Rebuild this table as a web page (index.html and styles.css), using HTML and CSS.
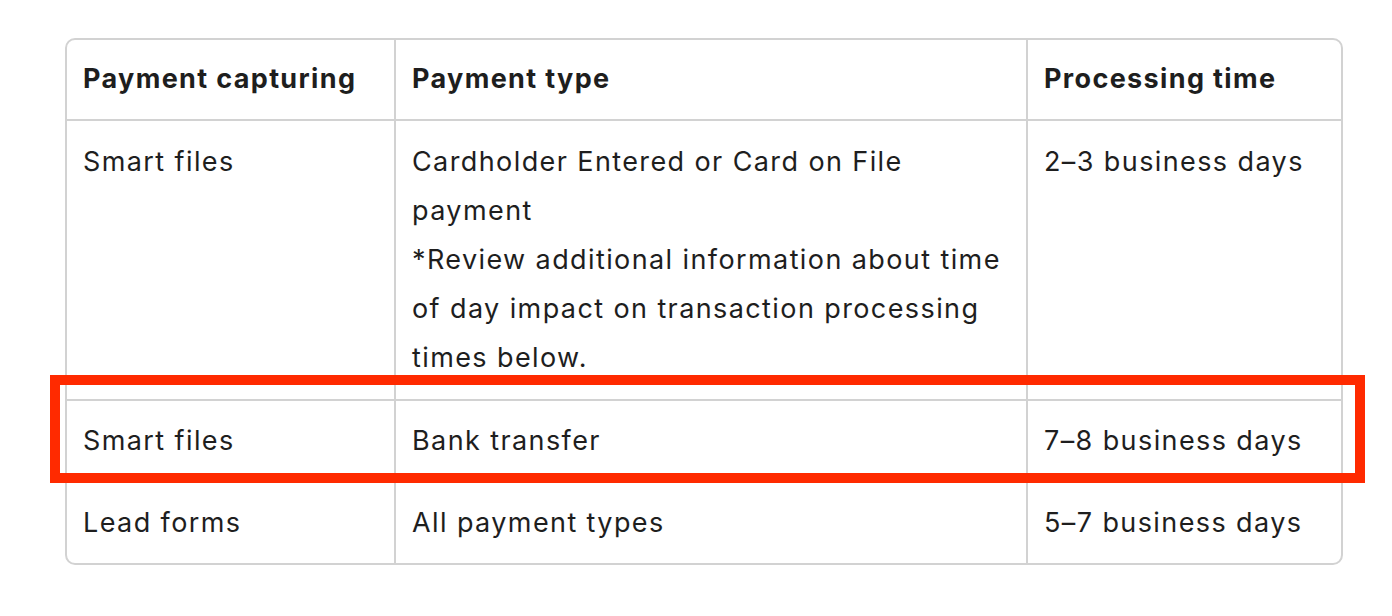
FILE: index.html
```html
<!DOCTYPE html>
<html>
<head>
<meta charset="utf-8">
<link rel="stylesheet" href="styles.css">
</head>
<body>
<div class="wrap">
  <table class="tbl">
    <colgroup>
      <col class="c1"><col class="c2"><col class="c3">
    </colgroup>
    <thead>
      <tr><th>Payment capturing</th><th>Payment type</th><th>Processing time</th></tr>
    </thead>
    <tbody>
      <tr class="r1"><td>Smart files</td><td>Cardholder Entered or Card on File payment<br>*Review additional information about time of day impact on transaction processing times below.</td><td>2–3 business days</td></tr>
      <tr class="r2"><td>Smart files</td><td>Bank transfer</td><td>7–8 business days</td></tr>
      <tr class="r3"><td>Lead forms</td><td>All payment types</td><td>5–7 business days</td></tr>
    </tbody>
  </table>
  <div class="highlight"></div>
</div>
</body>
</html>
```
FILE: styles.css
```css
html, body { margin: 0; padding: 0; background: #fff; }
body { font-family: Inter, "Noto Sans", sans-serif; color: #1e1e1e; }
.wrap { position: relative; padding: 38px 0 0 65px; width: 1278px; }
.tbl {
  border-collapse: separate;
  border-spacing: 0;
  border: 2px solid #d2d2d2;
  border-radius: 10px;
  table-layout: fixed;
  width: 1278px;
  font-size: 27px;
  line-height: 49px;
  letter-spacing: 1.4px;
}
.c1 { width: 329px; }
.c2 { width: 632px; }
.c3 { width: 313px; }
th, td {
  text-align: left;
  vertical-align: top;
  padding: 15px 16px 16px 16px;
  border-right: 2px solid #d2d2d2;
  border-bottom: 2px solid #d2d2d2;
}
th { font-weight: 700; letter-spacing: 1.35px; padding-top: 14px; padding-bottom: 16px; }
.r1 td { padding-top: 16px; padding-bottom: 17px; }
th:last-child, td:last-child { border-right: none; }
.r3 td { border-bottom: none; }
.highlight {
  position: absolute;
  left: 50px; top: 375px;
  width: 1295px; height: 88px;
  border: 10px solid #ff2a00;
}
```
